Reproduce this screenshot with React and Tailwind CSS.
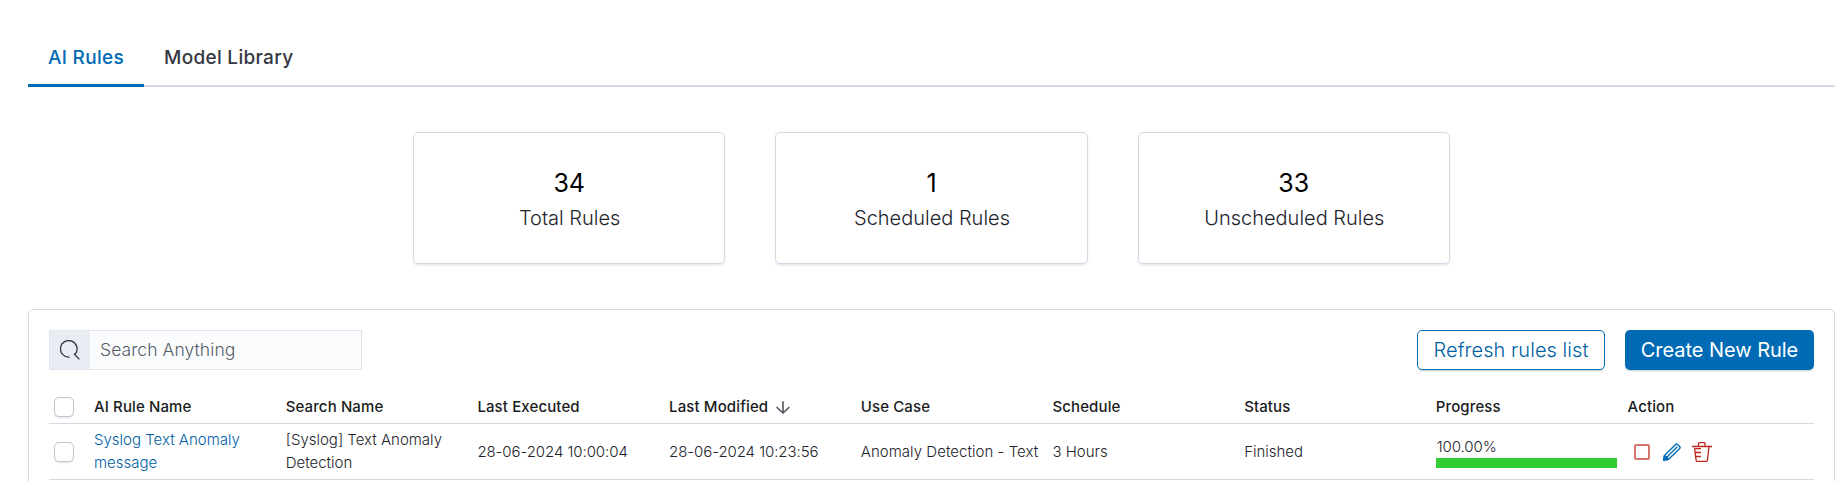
import React from "react";

const stats = [
  { value: "34", label: "Total Rules" },
  { value: "1", label: "Scheduled Rules" },
  { value: "33", label: "Unscheduled Rules" },
];

function SearchIcon() {
  return (
    <svg width="20" height="20" viewBox="0 0 20 20" fill="none" stroke="#343741" strokeWidth="1.3">
      <path d="M9.6 17.1A8.3 8.3 0 1 1 15.6 13.6L14.2 14L19.4 19.4" strokeLinejoin="round" />
    </svg>
  );
}

function SortDownIcon() {
  return (
    <svg width="14" height="13" viewBox="0 0 14 13" fill="none" stroke="#53565f" strokeWidth="1.6">
      <path d="M7 0.3V12M0.6 6L7 12L13.4 6" />
    </svg>
  );
}

function PencilIcon() {
  return (
    <svg width="18" height="18" viewBox="0 0 18 18" fill="none" stroke="#006BB4" strokeWidth="1.35" strokeLinejoin="round">
      <path d="M0.8 17.2L1.4 12.6L12.6 1.4Q13.4 0.6 14.2 1.3L16.8 3.8Q17.5 4.6 16.7 5.4L5.4 16.4Z" />
      <path d="M4 13.9L14.3 3.7M1.4 12.6L4 13.9L5.4 16.4" />
      <path d="M0.8 17.2L1.3 13L3.8 14.2L5 16.5Z" fill="#006BB4" />
    </svg>
  );
}

function TrashIcon() {
  return (
    <svg width="20" height="20" viewBox="0 0 20 20" fill="none" stroke="#BD271E" strokeWidth="1.3">
      <path d="M0 4.5H20M6.5 4.5V1.5Q6.5 0.7 7.3 0.7H12.2Q13 0.7 13 1.5V4.5" />
      <path d="M2.6 6.5L4.1 18.3Q4.3 19.3 5.3 19.3H14.2Q15.2 19.3 15.4 18.3L17 4.5M2.6 6.6H9M3.2 10.5H9M3.6 14.5H9" />
    </svg>
  );
}

function Checkbox() {
  return <span className="block h-5 w-5 rounded-[5px] border border-[#c2c4c7] bg-white shadow-[0_2px_2px_-1px_rgba(152,162,179,0.3)]" />;
}

const cols = "grid grid-cols-[45px_191.7px_191.7px_191.7px_191.7px_191.7px_191.7px_191.7px_191.7px_1fr]";
const headText = "text-[15px] font-medium tracking-[0.12px] text-[#1a1c21]";

export default function App() {
  return (
    <div className="h-[481px] overflow-hidden bg-white pl-7 pr-[2px] font-['Inter',sans-serif] text-[#343741]">
      <nav className="flex h-[87px] items-end shadow-[inset_0_-2px_0_#D3DAE6]">
        <div className="flex h-[59px] w-[116px] items-center justify-center border-b-3 border-[#006BB4] pt-[5px] text-[19px] font-medium tracking-[0.3px] text-[#006BB4]">
          AI Rules
        </div>
        <div className="flex h-[59px] items-center border-b-3 border-transparent pt-[5px] pl-5 text-[19px] font-medium tracking-[0.3px] text-[#343741]">
          Model Library
        </div>
      </nav>

      <section className="mt-[45px] flex justify-center gap-[50px]">
        {stats.map((s) => (
          <div key={s.label} className="flex h-[132px] w-[312.3px] flex-col items-center rounded-[5px] border border-[#D3DAE6] pt-[32px] shadow-[0_2px_3px_-1px_rgba(152,162,179,0.35)]">
            <div className="text-[25px] leading-[36px] font-normal text-black">{s.value}</div>
            <div className="mt-px pl-px text-xl leading-[32px] font-light text-[#22242b]">{s.label}</div>
          </div>
        ))}
      </section>

      <main className="mt-[45px] h-[220px] rounded-[5px] border border-[#D3DAE6] px-5 pt-5 shadow-[0_2px_3px_-1px_rgba(152,162,179,0.35)]">
        <div className="flex items-center">
          <div className="flex h-10 w-[313px] border border-[#e2e5ee] bg-[#fbfcfd]">
            <div className="flex w-10 items-center justify-center bg-[#e9edf3]">
              <SearchIcon />
            </div>
            <div className="flex items-center pl-[10px] text-[17.5px] font-light tracking-[0.08px] text-[#565c68]">Search Anything</div>
          </div>
          <button className="ml-auto flex h-10 w-[188px] items-center justify-center rounded-[5px] border border-[#006BB4] text-xl font-light tracking-[0.06px] text-[#005fa6] shadow-[0_2px_2px_-1px_rgba(54,97,126,0.3)]">
            Refresh rules list
          </button>
          <button className="ml-5 flex h-10 w-[189px] items-center justify-center rounded-[5px] bg-[#006BB4] text-xl font-normal tracking-[-0.04px] text-white shadow-[0_2px_2px_-1px_rgba(54,97,126,0.3)]">
            Create New Rule
          </button>
        </div>

        <div className={cols + " mt-[19px] h-[35px] items-center border-b border-[#D3DAE6] pt-[2px] " + headText}>
          <div className="pl-[5px]"><Checkbox /></div>
          <div>AI Rule Name</div>
          <div>Search Name</div>
          <div>Last Executed</div>
          <div className="flex items-center gap-2">Last Modified <SortDownIcon /></div>
          <div>Use Case</div>
          <div>Schedule</div>
          <div>Status</div>
          <div>Progress</div>
          <div>Action</div>
        </div>

        <div className={cols + " h-14 items-center border-b border-[#D3DAE6] text-[15px] leading-[23px] font-light text-[#22242b]"}>
          <div className="pl-[5px]"><Checkbox /></div>
          <div className="pr-10 pb-[2px] text-[#005fa6]">Syslog Text Anomaly message</div>
          <div className="pr-8 pb-[2px]">[Syslog] Text Anomaly Detection</div>
          <div className="tracking-[-0.07px]">28-06-2024 10:00:04</div>
          <div className="tracking-[-0.07px]">28-06-2024 10:23:56</div>
          <div className="tracking-[0.04px] whitespace-nowrap">Anomaly Detection - Text</div>
          <div>3 Hours</div>
          <div>Finished</div>
          <div className="pt-px pr-[11px]">
            <div className="pl-px text-[15px] leading-[22px] tracking-[-0.1px]">100.00%</div>
            <div className="h-[10px] bg-[#32CD32]" />
          </div>
          <div className="flex items-center pl-[6px]">
            <span className="block h-4 w-4 rounded-[2px] border-2 border-[#d6746e]" />
            <span className="ml-[13px]"><PencilIcon /></span>
            <span className="ml-[11px]"><TrashIcon /></span>
          </div>
        </div>
      </main>
    </div>
  );
}
